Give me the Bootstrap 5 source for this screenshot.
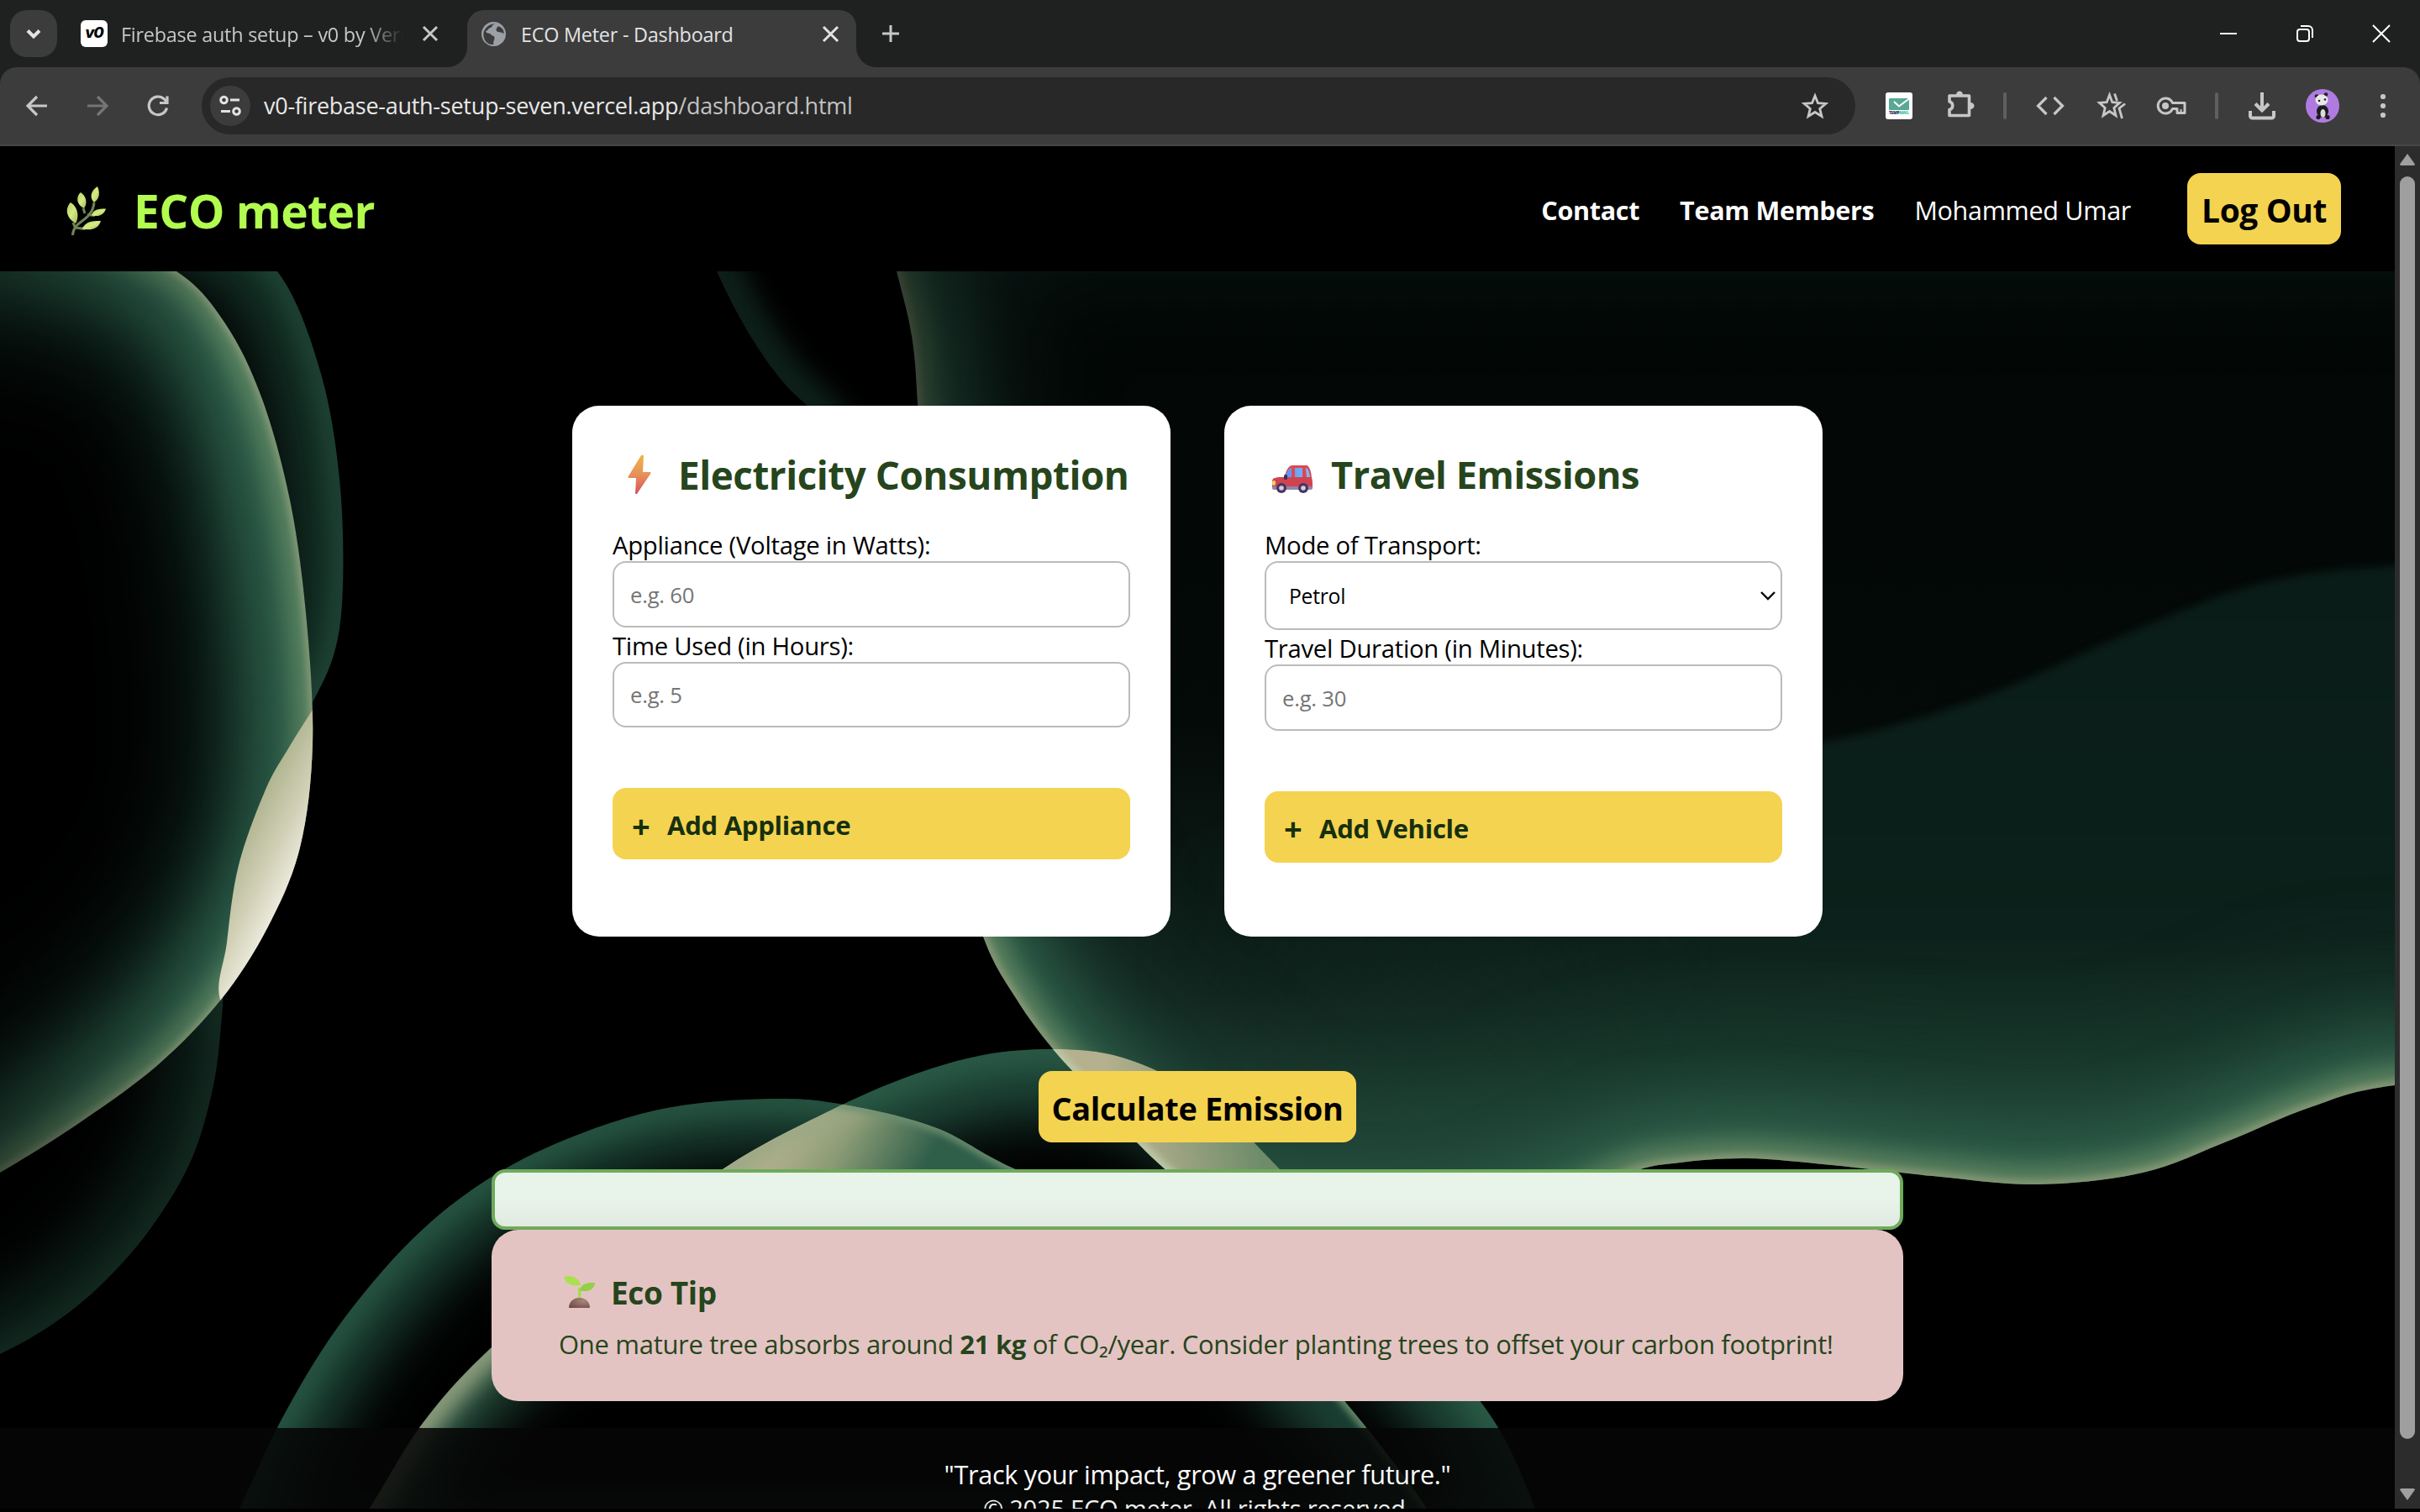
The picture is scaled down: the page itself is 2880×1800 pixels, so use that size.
<!DOCTYPE html>
<html lang="en">
<head>
<meta charset="utf-8">
<title>ECO Meter - Dashboard</title>
<link href="https://cdn.jsdelivr.net/npm/bootstrap@5.3.0/dist/css/bootstrap.min.css" rel="stylesheet">
<script src="https://cdn.jsdelivr.net/npm/bootstrap@5.3.0/dist/js/bootstrap.bundle.min.js"></script>
<style>
  html, body { height: 100%; }
  body { font-family: "Open Sans", "Noto Sans", sans-serif; background: #000; overflow: hidden; font-size: 30.6px; line-height: 1.35; }
  body *, input, select, button { letter-spacing: -.01em; }
  .app-window { width: 2880px; height: 1800px; }
  svg { display: block; flex: none; overflow: visible; }
  .ic { fill: none; stroke: #c7c7c7; stroke-width: 4; }
  filter { color-interpolation-filters: sRGB; }

  /* tab strip */
  .tab-strip { height: 80px; background: #1f2120; color: #c7c7c7; font-size: 23.4px; padding: 12px 36px 0 12px; }
  .tab-search { width: 56px; height: 56px; border-radius: 20px; background: #3c3c3c; }
  .tab-idle { width: 488px; height: 56px; padding-left: 28px; }
  .tab-open { width: 463px; height: 68px; background: #3c3c3c; border-radius: 20px 20px 0 0; padding: 0 22px 12px 17px; color: #e3e3e3; }
  .tab-open::before, .tab-open::after { content: ""; position: absolute; bottom: 0; width: 24px; height: 24px; }
  .tab-open::before { left: -24px; background: radial-gradient(circle at 0 0, transparent 23.5px, #3c3c3c 24.5px); }
  .tab-open::after { right: -24px; background: radial-gradient(circle at 100% 0, transparent 23.5px, #3c3c3c 24.5px); }
  .tab-name { white-space: nowrap; overflow: hidden; line-height: 36px; padding-top: 1px; }
  .tab-fade { width: 336px; -webkit-mask-image: linear-gradient(90deg, #000 290px, transparent 336px); }
  .fav-v0 { width: 32px; height: 32px; border-radius: 6px; background: #fff; color: #000; font: italic 800 18px/30px "Inter", sans-serif; letter-spacing: -1px; }
  .win-btns { gap: 71px; height: 56px; }

  /* toolbar */
  .tool-bg { background: #1f2120; }
  .tool-row { height: 94px; background: #3c3c3c; border-bottom: 2px solid #474747; border-radius: 20px 20px 0 0; padding: 0 20px 0; }
  .tool-row > .cell, .tool-row > svg { width: 48px; height: 48px; flex: none; }
  .nav-set { gap: 24px; }
  .omni { width: 1968px; height: 68px; border-radius: 34px; background: #282828; margin-left: 28px; padding: 0 24px 0 10px; font-size: 27px; color: #e8e8e8; flex: none; }
  .omni-chip { width: 48px; height: 48px; border-radius: 50%; background: #3c3c3c; margin-right: 16px; }
  .omni-url { padding-top: 1px; }
  .omni-path { color: #c2c2c2; }
  .tool-sep { width: 4px; height: 32px; border-radius: 2px; background: #5f5f5f; flex: none; }
  .g24 { margin-left: 24px; } .g26 { margin-left: 26px; } .g28 { margin-left: 28px; }

  /* page */
  .page-view { height: 1624px; overflow: hidden; border-bottom: 2px solid #000; }
  .page-body { width: 2850px; }
  .backdrop { top: 149px; left: 0; z-index: 0; }
  .site-head { height: 149px; background: #000; padding: 0 64px 0 74px; z-index: 1; }
  .brand-name { font-size: 55px; font-weight: 700; color: #b2fc50; line-height: 76px; margin: 5px 0 0 25px; }
  .head-link { color: #fff; text-decoration: none; font-size: 30.5px; line-height: 44px; margin-right: 48px; padding-top: 2px; }
  .eco-btn { background: #f4d350; border: 0; border-radius: 16px; height: 85px; color: #000; font-weight: 700; font-size: 38.9px; padding: 3px 0 0; white-space: nowrap; }
  .eco-btn:hover { background: #f4d350; }
  .main-area { z-index: 1; }
  .panel-row { gap: 64px; padding-top: 160px; }
  .eco-panel { width: 712px; height: 632px; background: #fff; border-radius: 32px; padding: 48px; }
  .panel-title { color: #26451c; font-weight: 700; font-size: 45.5px; line-height: 68px; height: 68px; margin: 0 0 28px; white-space: nowrap; }
  .field-name { color: #000; font-size: 29.3px; line-height: 44px; height: 41px; margin-bottom: 0; display: block; white-space: nowrap; }
  .eco-input { height: 78.5px; border: 2px solid #bbb; border-radius: 16px; font-size: 25.7px; padding: 2px 19px 0; color: #000; }
  .eco-input::placeholder { color: #757575; opacity: 1; }
  .eco-select { height: 82px; padding-left: 27px; font-size: 24.7px; background-size: 22px; background-position: right 4px center;
    background-image: url("data:image/svg+xml,%3csvg xmlns='http://www.w3.org/2000/svg' viewBox='0 0 22 22'%3e%3cpath fill='none' stroke='%23000' stroke-width='2.4' d='M3 7l8 8 8-8'/%3e%3c/svg%3e"); }
  .add-btn { margin-top: 72px; font-size: 31.1px; color: #16300e; padding: 4px 0 0 23px; }
  .add-plus { width: 42px; font-size: 38px; padding-top: 1px; }
  .calc-btn { width: 378px; margin-top: 160px; font-size: 37.9px; }
  .result-box { width: 1680px; height: 72px; margin-top: 32px; border: 4px solid #6eaa5b; border-radius: 16px; background: linear-gradient(#e8f3ea 50%, #e0eae1); }
  .tip-box { width: 1680px; height: 204px; border-radius: 32px; background: #e4c4c3; color: #26451c; padding: 49px 80px; }
  .tip-title { font-size: 37px; font-weight: 700; line-height: 52px; margin: 0; }
  .tip-text { font-size: 31px; line-height: 44px; margin: 13px 0 0; white-space: nowrap; }
  .site-foot { margin-top: 32px; height: 120px; background: rgba(6, 6, 6, .87); color: #fff; padding-top: 33px; }
  .foot-line { line-height: 44px; height: 40px; margin: 0; }
  .foot-small { font-size: 29.2px; line-height: 44px; height: 40px; margin: 0; padding-top: 1px; color: #f0f0f0; }
  .scroll-rail { width: 30px; background: #2c2c2c; padding: 13px 0 10px; }
  .scroll-thumb { width: 18px; height: 1503px; border-radius: 9px; background: #9f9f9f; margin-top: 13px; }
</style>
</head>
<body>
<div class="app-window d-flex flex-column">

  <div class="tab-strip d-flex align-items-start">
    <div class="tab-search d-flex align-items-center justify-content-center">
      <svg width="20" height="20" class="ic" style="stroke:#e3e3e3"><path d="M3 6.500l7 7 7-7"/></svg>
    </div>
    <div class="tab-idle d-flex align-items-center">
      <div class="fav-v0 text-center me-3">v0</div>
      <div class="tab-name tab-fade">Firebase auth setup – v0 by Vercel</div>
      <svg width="16" height="16" class="ic" style="margin-left:24px;stroke-width:3"><path d="M0 0l16 16M16 0L0 16"/></svg>
    </div>
    <div class="tab-open position-relative d-flex align-items-center">
      <svg width="29" height="29" viewBox="0 0 28 28"><circle cx="14" cy="14" r="14" fill="#9aa0a6"/><path d="M16 2.500c-5 1-3 4-6 4.500-3 .8-2 3-5 3.500 0 3 5 2 6 4 1 2 4 1 4 4s-2 4-1 7.500C6 27 2 20 2.300 13.500 3 8 8 2 16 2.500zM19 5c-2 3-3 4-1 6 3 2 6 0 7.500 3 1-4-2-8-6.500-9z" fill="#3c3c3c"/></svg>
      <div class="tab-name" style="margin-left:18px">ECO Meter - Dashboard</div>
      <svg width="17" height="17" class="ic ms-auto" style="stroke:#e3e3e3;stroke-width:3"><path d="M0 0l17 17M17 0L0 17"/></svg>
    </div>
    <div class="d-flex align-items-center" style="height:56px;margin-left:31px"><svg width="20" height="20" class="ic" style="stroke-width:3"><path d="M10 0v20M0 10h20"/></svg></div>
    <div class="win-btns d-flex align-items-center ms-auto">
      <svg width="20" height="20" class="ic" style="stroke:#fff;stroke-width:2"><path d="M0 10h20"/></svg>
      <svg width="20" height="20" class="ic" style="stroke:#fff;stroke-width:2"><rect x="1" y="5" width="14" height="14" rx="3"/><path d="M5 1h9a5 5 0 0 1 5 5v9"/></svg>
      <svg width="20" height="20" class="ic" style="stroke:#fff;stroke-width:2"><path d="M0 0l20 20M20 0L0 20"/></svg>
    </div>
  </div>

  <div class="tool-bg">
  <div class="tool-row d-flex align-items-center">
    <div class="nav-set d-flex">
      <svg width="48" height="48" class="ic" style="stroke-width:3.200"><path d="M36 24H13.500M24 13L13 24l11 11"/></svg>
      <svg width="48" height="48" class="ic" style="stroke:#757575;stroke-width:3.200"><path d="M12 24h22.500M24 13l11 11-11 11"/></svg>
      <svg width="48" height="48" class="ic" style="stroke-width:3.200"><path d="M34.500 26.500a10.800 10.800 0 1 1-3-10.500l3 3.500M35 12.500V20.500H26"/></svg>
    </div>
    <div class="omni d-flex align-items-center">
      <div class="omni-chip d-flex align-items-center justify-content-center">
        <svg width="26" height="26" class="ic" style="stroke-width:3;stroke:#e3e3e3"><circle cx="5.500" cy="6" r="3.800"/><path d="M13 6h11M2 19.500h11"/><circle cx="20.500" cy="19.500" r="3.800"/></svg>
      </div>
      <div class="omni-url text-nowrap">v0-firebase-auth-setup-seven.vercel.app<span class="omni-path">/dashboard.html</span></div>
      <svg width="48" height="48" class="ic ms-auto" style="stroke-width:2.800"><path d="M24 12l3.500 8.700 9.300.7-7.100 6 2.300 9.100-8-5-8 5 2.300-9.100-7.100-6 9.300-.7z"/></svg>
    </div>
    <div class="cell g28 d-flex align-items-center justify-content-center">
      <svg width="32" height="32"><rect width="32" height="32" rx="3" fill="#fff"/><rect x="4" y="7" width="24" height="14" rx="1" fill="#58a994"/><path d="M10 11l6 5.500L28 7.500" fill="none" stroke="#fff" stroke-width="2"/><text x="4" y="26.300" font-family="Open Sans" font-weight="800" font-size="4.800" textLength="24" fill="#1d2f5c">TEMP<tspan fill="#4fc3a1">MAIL</tspan></text></svg>
    </div>
    <svg class="ic g26" style="stroke-width:3.600"><path d="M10 12H33.500V35.500H10V28.500C15 27.500 15 20 10 19z" stroke-linejoin="round"/><path d="M18 11a4 4.500 0 0 1 8 0zM35 20a4.500 4 0 0 1 0 8z" fill="#c7c7c7" stroke="none"/></svg>
    <div class="tool-sep g26"></div>
    <svg class="ic g28" style="stroke-width:3.200"><path d="M19.500 14L9.500 24l10 10M28.500 14l10 10-10 10"/></svg>
    <svg class="ic g24" style="stroke-width:2.800"><path d="M22.500 11l3.300 8.700 8.700.7-6.700 6 2.200 9.100-7.500-5-7.500 5 2.200-9.100-6.700-6 8.700-.7z"/><path d="M28.500 9.500l3 8.500M41 21.500l-7 5.500 3.500 12" /></svg>
    <svg class="ic" style="stroke-width:3;margin-left:25px"><path d="M24.500 20.500a9 9 0 1 0 0 7H30v5h9V20.500z" stroke-linejoin="round"/><circle cx="16" cy="24" r="4" fill="#c7c7c7" stroke="none"/><path d="M34.500 28v4" stroke-width="2"/></svg>
    <div class="tool-sep" style="margin-left:27px"></div>
    <svg class="ic g28"><path d="M24 8v20M16 21.500l8 8 8-8M10 30v6a2.500 2.500 0 0 0 2.500 2.500h23A2.500 2.500 0 0 0 38 36v-6"/></svg>
    <svg class="g24"><circle cx="24" cy="24" r="20" fill="#b07be0"/><circle cx="17" cy="12.500" r="2.300" fill="#222"/><circle cx="28" cy="10.500" r="2.300" fill="#222"/><ellipse cx="24" cy="30.500" rx="7" ry="7.500" fill="#1c1c1c"/><ellipse cx="23" cy="17" rx="7.500" ry="6.500" fill="#e9e9e9"/><circle cx="20" cy="18" r="1.300" fill="#222"/><circle cx="27" cy="16.500" r="1.300" fill="#222"/><ellipse cx="24.500" cy="33" rx="3" ry="5" fill="#dcdcdc"/><circle cx="19" cy="37.500" r="2.600" fill="#1c1c1c"/><circle cx="30" cy="37.500" r="2.600" fill="#1c1c1c"/></svg>
    <svg class="g24"><g fill="#c7c7c7"><circle cx="24" cy="13" r="3.100"/><circle cx="24" cy="24" r="3.100"/><circle cx="24" cy="35" r="3.100"/></g></svg>
  </div>
  </div>

  <div class="page-view d-flex">
    <div class="page-body position-relative">

      <svg class="backdrop position-absolute" width="2850" height="1475" viewBox="0 323 2850 1475" style="overflow:hidden">
        <defs>
          <filter id="b3" filterUnits="userSpaceOnUse" x="-400" y="0" width="3700" height="2300"><feGaussianBlur stdDeviation="4"/></filter>
          <filter id="b12" filterUnits="userSpaceOnUse" x="-400" y="0" width="3700" height="2300"><feGaussianBlur stdDeviation="14"/></filter>
          <filter id="b30" filterUnits="userSpaceOnUse" x="-400" y="0" width="3700" height="2300"><feGaussianBlur stdDeviation="36"/></filter>
          <filter id="b60" filterUnits="userSpaceOnUse" x="-400" y="0" width="3700" height="2300"><feGaussianBlur stdDeviation="70"/></filter>
          <path id="orbA" data-pts="-300,330 -150,285 0,272 110,283 210,323 268,385 312,475 346,600 365,740 372,886 357,1009 318,1105 263,1190 190,1266 100,1333 0,1396 -150,1480 -400,1550"/>
          <path id="orbB" data-pts="-300,250 150,240 260,268 335,330 382,445 404,570 408,697 397,780 362,855 316,940 284,1030 270,1122 264,1210 254,1292 228,1380 181,1460 125,1525 66,1574 0,1612 -90,1650 -300,1720"/>
          <path id="arcC" data-pts="240,1880 283,1800 335,1690 402,1580 491,1475 585,1401 690,1350 800,1318 926,1308 1015,1317 1115,1343 1204,1390 1350,1450 1480,1530 1585,1650 1650,1730 1700,1800 1740,1880"/>
          <path id="arcD" data-pts="380,1880 437,1800 504,1693 585,1604 700,1510 860,1392 980,1326 1080,1282 1170,1256 1254,1249 1325,1256 1395,1284 1460,1330 1522,1391 1650,1530 1740,1640 1790,1712 1828,1800 1850,1880"/>
          <path id="waveE" data-pts="1035,200 1067,323 1085,400 1092,480 1098,620 1112,800 1134,980 1170,1115 1210,1190 1254,1250 1305,1305 1350,1357 1410,1410 1500,1460 1700,1480 1850,1435 1943,1395 2000,1384 2080,1379 2180,1387 2300,1400 2425,1410 2550,1396 2650,1359 2750,1318 2850,1292 3100,1270 3100,200"/>
          <path id="waveF" data-pts="1300,1060 1500,960 1700,910 1900,895 2050,894 2180,882 2359,830 2537,752 2690,695 2850,674 3100,670 3100,1600 1300,1600"/>
          <path id="slitG" data-pts="820,240 853,323 890,395 932,455 977,500 1060,600 1200,600 1200,200"/>
          <clipPath id="cA"><use href="#orbA"/></clipPath><clipPath id="cB"><use href="#orbB"/></clipPath>
          <clipPath id="cC"><use href="#arcC"/></clipPath><clipPath id="cD"><use href="#arcD"/></clipPath>
          <clipPath id="cE"><use href="#waveE"/></clipPath><clipPath id="cG"><use href="#slitG"/></clipPath>
          <linearGradient id="fadeA" gradientUnits="userSpaceOnUse" x1="0" y1="0" x2="270" y2="0"><stop offset="0" stop-color="#8a8a8a"/><stop offset="1" stop-color="#fff"/></linearGradient>
          <mask id="mA" maskUnits="userSpaceOnUse" x="-400" y="0" width="1200" height="2000"><rect x="-400" width="1200" height="2000" fill="url(#fadeA)"/></mask>
          <linearGradient id="fadeB" gradientUnits="userSpaceOnUse" x1="0" y1="900" x2="0" y2="1250"><stop offset="0" stop-color="#fff"/><stop offset="1" stop-color="#999"/></linearGradient>
          <mask id="mB" maskUnits="userSpaceOnUse" x="-400" y="0" width="1200" height="2000"><rect x="-400" width="1200" height="2000" fill="url(#fadeB)"/></mask>
          <linearGradient id="fadeE" gradientUnits="userSpaceOnUse" x1="0" y1="323" x2="0" y2="1130"><stop offset="0" stop-color="#666"/><stop offset=".4" stop-color="#888"/><stop offset="1" stop-color="#fff"/></linearGradient>
          <mask id="mE" maskUnits="userSpaceOnUse" x="900" y="0" width="2400" height="2000"><rect x="900" width="2400" height="2000" fill="url(#fadeE)"/></mask>
          <linearGradient id="fadeF" gradientUnits="userSpaceOnUse" x1="1350" y1="0" x2="2050" y2="0"><stop offset="0" stop-color="#000"/><stop offset="1" stop-color="#fff"/></linearGradient>
          <mask id="mF" maskUnits="userSpaceOnUse" x="900" y="0" width="2400" height="2000"><rect x="900" width="2400" height="2000" fill="url(#fadeF)"/></mask>
          <linearGradient id="cream" gradientUnits="userSpaceOnUse" x1="280" y1="1010" x2="360" y2="1050"><stop offset="0" stop-color="#b0b590"/><stop offset=".5" stop-color="#d2d1b8"/><stop offset="1" stop-color="#f6f4ea"/></linearGradient>
          <linearGradient id="fillE" gradientUnits="userSpaceOnUse" x1="0" y1="323" x2="0" y2="1400"><stop offset="0" stop-color="#020605"/><stop offset=".5" stop-color="#040a08"/><stop offset=".8" stop-color="#11241e"/><stop offset="1" stop-color="#234a3b"/></linearGradient>
          <linearGradient id="fillF" gradientUnits="userSpaceOnUse" x1="0" y1="680" x2="0" y2="1400"><stop offset="0" stop-color="#0a1c18"/><stop offset=".6" stop-color="#0c211b"/><stop offset=".8" stop-color="#173529"/><stop offset="1" stop-color="#295643"/></linearGradient>
          <linearGradient id="warm" gradientUnits="userSpaceOnUse" x1="940" y1="1345" x2="1080" y2="1425"><stop offset="0" stop-color="#b3b18c"/><stop offset=".4" stop-color="#8a9b75"/><stop offset="1" stop-color="#2f5e49"/></linearGradient>
          <linearGradient id="strip" gradientUnits="userSpaceOnUse" x1="1340" y1="1350" x2="1480" y2="1310"><stop offset="0" stop-color="#b5b08e"/><stop offset="1" stop-color="#6f8c6a"/></linearGradient>
        </defs>
        <rect x="0" y="323" width="2850" height="1475" fill="#000"/>

        <g clip-path="url(#cG)"><use href="#slitG" fill="none" stroke="#0d1f19" stroke-width="60" filter="url(#b12)"/></g>

        <g clip-path="url(#cE)">
          <use href="#waveE" fill="url(#fillE)"/>
          <g mask="url(#mF)"><use href="#waveF" fill="url(#fillF)" filter="url(#b3)"/></g>
          <g mask="url(#mE)">
            <use href="#waveE" fill="none" stroke="#1d4034" stroke-width="180" filter="url(#b60)"/>
            <use href="#waveE" fill="none" stroke="#2f604b" stroke-width="110" filter="url(#b30)"/>
            <use href="#waveE" fill="none" stroke="#5f8460" stroke-width="42" filter="url(#b12)"/>
            <use href="#waveE" fill="none" stroke="#889877" stroke-width="10" filter="url(#b3)"/>
          </g>
        </g>

        <g clip-path="url(#cB)">
          <g mask="url(#mB)">
            <use href="#orbB" fill="none" stroke="#153529" stroke-width="120" filter="url(#b30)"/>
            <use href="#orbB" fill="none" stroke="#28503f" stroke-width="16" filter="url(#b12)"/>
          </g>
        </g>
        <g clip-path="url(#cA)">
          <use href="#orbA" fill="#000"/>
          <g mask="url(#mA)">
            <use href="#orbA" fill="none" stroke="#1b4436" stroke-width="210" filter="url(#b60)"/>
            <use href="#orbA" fill="none" stroke="#2f5f4b" stroke-width="130" filter="url(#b30)"/>
            <use href="#orbA" fill="none" stroke="#5a8360" stroke-width="44" filter="url(#b12)"/>
            <use href="#orbA" fill="none" stroke="#93a182" stroke-width="7" filter="url(#b3)"/>
          </g>
          <path fill="url(#cream)" data-pts="372,845 345,888 316,940 284,1030 270,1122 264,1195 330,1250 460,1200 460,840"/>
        </g>

        <g clip-path="url(#cC)">
          <use href="#arcC" fill="#000"/>
          <use href="#arcC" fill="none" stroke="#1f4b3b" stroke-width="110" filter="url(#b30)"/>
          <use href="#arcC" fill="none" stroke="#2b5845" stroke-width="22" filter="url(#b12)"/>
        </g>
        <g clip-path="url(#cD)">
          <use href="#arcD" fill="#000"/>
          <use href="#arcD" fill="none" stroke="#214d3d" stroke-width="150" filter="url(#b30)"/>
          <use href="#arcD" fill="none" stroke="#2f5f4a" stroke-width="22" filter="url(#b12)"/>
          <g clip-path="url(#cC)">
            <rect x="280" y="1250" width="1600" height="560" fill="#000"/>
            <use href="#arcC" fill="none" stroke="#1d4436" stroke-width="130" filter="url(#b30)"/>
            <use href="#arcD" fill="none" stroke="#2b5845" stroke-width="110" filter="url(#b30)"/>
            <rect x="800" y="1300" width="460" height="200" fill="url(#warm)"/>
            <use href="#arcD" fill="none" stroke="#9aa784" stroke-width="34" filter="url(#b12)"/>
            <use href="#arcC" fill="none" stroke="#6d8f70" stroke-width="10" filter="url(#b3)"/>
          </g>
          <g clip-path="url(#cE)">
            <rect x="1200" y="1200" width="500" height="400" fill="url(#strip)"/>
            <use href="#waveE" fill="none" stroke="#bcc9a8" stroke-width="12" filter="url(#b3)"/>
          </g>
        </g>
      </svg>

      <header class="site-head position-relative d-flex align-items-center">
        <svg width="60" height="60" viewBox="0 0 60 60" style="margin-top:7px">
          <defs><linearGradient id="lf" x1="0" y1="0" x2="1" y2="1"><stop offset="0" stop-color="#b7d060"/><stop offset=".5" stop-color="#d3ec84"/><stop offset="1" stop-color="#a3b857"/></linearGradient></defs>
          <g fill="none" stroke="#6f8354" stroke-width="3"><path d="M12.500 58C13 40 36 42 38 19M15 48l-2-5M15.500 49l12 1.500M27 32l-2-6M30 33.500l9 1"/></g>
          <g fill="url(#lf)"><path d="M10 19c-6 6-7 17 6 25 5-9 2-20-6-25z"/><path d="M22 7c-6 5-5 15 4 19 5-7 2-15-4-19z"/><path d="M42 0c-8 5-10 13-4 19 7-5 7-12 4-19z"/><path d="M52 26.500c-10 0-15 1-17 8 9 2 15-1 17-8z"/><path d="M46 41c-12 0-18 1-22.500 9.500 10 2 19 1 22.500-9.500z"/></g>
        </svg>
        <div class="brand-name text-nowrap">ECO meter</div>
        <nav class="d-flex align-items-center ms-auto">
          <a class="head-link fw-bold" href="#">Contact</a>
          <a class="head-link fw-bold" href="#">Team Members</a>
          <a class="head-link" href="#" style="margin-right:67px">Mohammed Umar</a>
          <button class="btn eco-btn" style="width:183px">Log Out</button>
        </nav>
      </header>

      <main class="main-area position-relative d-flex flex-column align-items-center">
        <div class="panel-row d-flex justify-content-center">
          <section class="eco-panel d-flex flex-column">
            <h2 class="panel-title d-flex align-items-center">
              <svg width="62" height="50" viewBox="0 0 62 50"><defs><linearGradient id="bolt" x1="0" y1="0" x2="0" y2="1"><stop offset="0" stop-color="#efb34b"/><stop offset=".5" stop-color="#e5925a"/><stop offset="1" stop-color="#d9505c"/></linearGradient></defs><path d="M34 2L18.500 27.500 19 29h9L27 48h2L45.500 23.500 45 22h-9L37 2z" fill="url(#bolt)"/></svg>
              <span style="margin-left:16px;font-size:45.8px">Electricity Consumption</span>
            </h2>
            <label class="field-name">Appliance (Voltage in Watts):</label>
            <input class="form-control eco-input" placeholder="e.g. 60">
            <label class="field-name">Time Used (in Hours):</label>
            <input class="form-control eco-input" placeholder="e.g. 5">
            <button class="btn eco-btn add-btn d-flex align-items-center w-100"><span class="add-plus text-start">+</span>Add Appliance</button>
          </section>
          <section class="eco-panel d-flex flex-column">
            <h2 class="panel-title d-flex align-items-center">
              <svg width="62" height="50" viewBox="0 0 62 50"><defs><linearGradient id="win" x1="0" y1="0" x2="1" y2="0"><stop offset="0" stop-color="#5b8df0"/><stop offset="1" stop-color="#7fc0fb"/></linearGradient></defs>
                <path d="M23 29c3-10 6-15 10-15h17c3 0 6 8 6 16l1 11H10c-1-8 0-12 5-12z" fill="#dc4854"/><path d="M9 33c0-4 3-5 14-5h33c1 4 1 8 1 12H9z" fill="#cf4450"/><path d="M24 28c2-6 5-11 8-11v11zM36 17h9v11h-9zM49 17c3 0 4 5 5 11h-4z" fill="url(#win)"/><rect x="23" y="25" width="4" height="6" rx="1.500" fill="#3c2f52"/><ellipse cx="11" cy="35" rx="2" ry="3" fill="#f4d55a"/><rect x="9" y="39" width="48" height="4" rx="2" fill="#9484a6"/><circle cx="20" cy="41" r="6" fill="#46365c"/><circle cx="20" cy="41" r="2.800" fill="#d8cbe8"/><circle cx="46" cy="41" r="6" fill="#46365c"/><circle cx="46" cy="41" r="2.800" fill="#d8cbe8"/></svg>
              <span style="margin-left:17px;font-size:45.200px">Travel Emissions</span>
            </h2>
            <label class="field-name">Mode of Transport:</label>
            <select class="form-select eco-input eco-select"><option>Petrol</option></select>
            <label class="field-name">Travel Duration (in Minutes):</label>
            <input class="form-control eco-input" placeholder="e.g. 30">
            <button class="btn eco-btn add-btn d-flex align-items-center w-100"><span class="add-plus text-start">+</span>Add Vehicle</button>
          </section>
        </div>
        <button class="btn eco-btn calc-btn">Calculate Emission</button>
        <div class="result-box"></div>
        <section class="tip-box">
          <h3 class="tip-title d-flex align-items-center">
            <svg width="50" height="44" viewBox="0 0 50 44"><defs><radialGradient id="soil" cx=".7" cy=".3" r=".9"><stop offset="0" stop-color="#ad857d"/><stop offset="1" stop-color="#6b4a44"/></radialGradient></defs><path d="M23 16h3.500v18H23z" fill="#a4dc52"/><path d="M6 3c8-2 18 0 20 10C15 14 8 12 6 3z" fill="#a9e04e"/><path d="M43 10c-9 0-17 1-18 9.500 10 2 17-1 18-9.500z" fill="#93cf47"/><path d="M12 40c0-16 25-16 25 0z" fill="url(#soil)"/></svg>
            <span style="margin-left:12px">Eco Tip</span>
          </h3>
          <p class="tip-text">One mature tree absorbs around <b>21 kg</b> of CO₂/year. Consider planting trees to offset your carbon footprint!</p>
        </section>
      </main>

      <footer class="site-foot position-relative text-center">
        <p class="foot-line">"Track your impact, grow a greener future."</p>
        <p class="foot-small">© 2025 ECO meter. All rights reserved.</p>
      </footer>
    </div>

    <div class="scroll-rail d-flex flex-column align-items-center">
      <svg width="18" height="14" style="margin-top:-4px"><path d="M9 0L18 12.500Q18 14 16 14H2Q0 14 0 12.500z" fill="#9f9f9f"/></svg>
      <div class="scroll-thumb"></div>
      <svg width="18" height="14" class="mt-auto"><path d="M9 14L0 1.500Q0 0 2 0H16Q18 0 18 1.500z" fill="#9f9f9f"/></svg>
    </div>
  </div>
</div>
<script>
  // Smooth every backdrop outline through its points (Catmull-Rom to cubic Bezier).
  document.querySelectorAll('[data-pts]').forEach(function (el) {
    var p = el.dataset.pts.trim().split(/\s+/).map(function (s) { return s.split(',').map(Number); });
    var d = 'M' + p[0];
    for (var i = 0; i < p.length - 1; i++) {
      var a = p[i - 1] || p[i], b = p[i], c = p[i + 1], e = p[i + 2] || c;
      d += 'C' + (b[0] + (c[0] - a[0]) / 6) + ',' + (b[1] + (c[1] - a[1]) / 6) + ' ' + (c[0] - (e[0] - b[0]) / 6) + ',' + (c[1] - (e[1] - b[1]) / 6) + ' ' + c;
    }
    el.setAttribute('d', d + 'Z');
  });
</script>
</body>
</html>
